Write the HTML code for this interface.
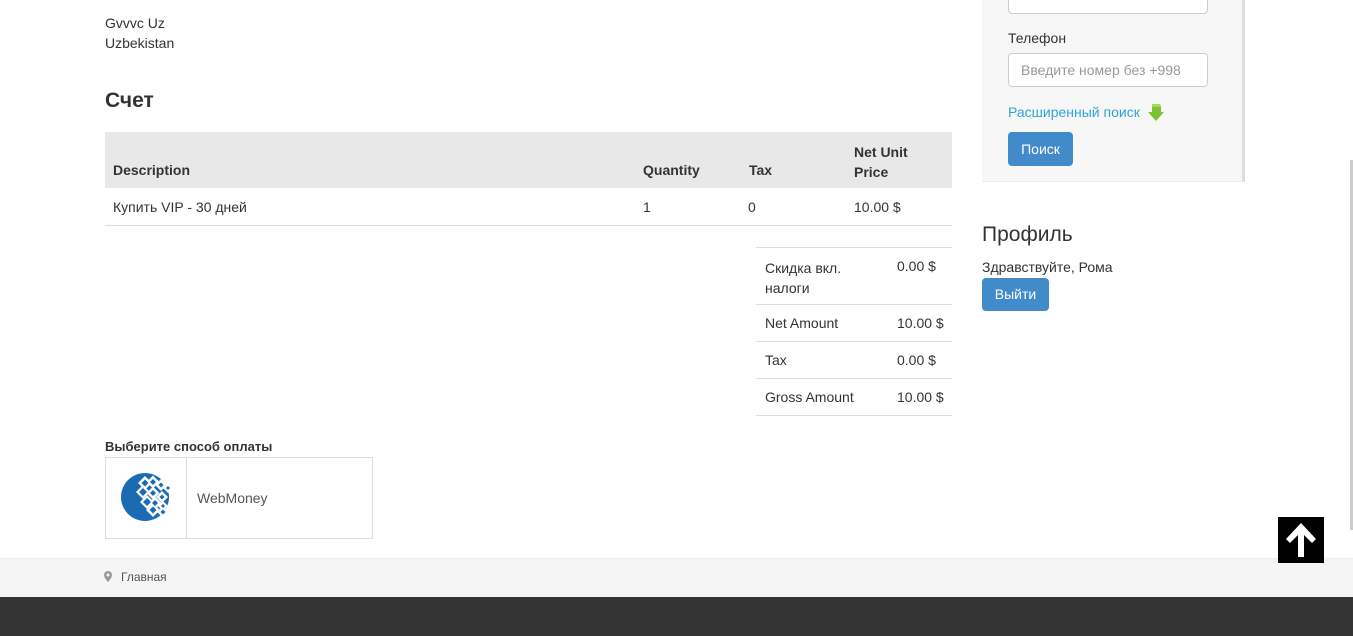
<!DOCTYPE html>
<html><head><meta charset="utf-8"><style>
body{margin:0;width:1353px;height:636px;position:relative;overflow:hidden;background:#fff;font-family:"Liberation Sans",Arial,sans-serif;font-size:14px;color:#333}
.a{position:absolute}
.b{font-weight:bold}
.line{position:absolute;height:1px;background:#ddd}
</style></head><body>
<div class="a" style="left:105px;top:13px;line-height:20px">Gvvvc Uz<br>Uzbekistan</div>
<div class="a" style="left:105px;top:89px;font-size:21px;font-weight:bold">Счет</div>
<div class="a" style="left:105px;top:132px;width:847px;height:56px;background:#e8e8e8"></div>
<div class="a b" style="left:113px;top:162px">Description</div>
<div class="a b" style="left:643px;top:162px">Quantity</div>
<div class="a b" style="left:749px;top:162px">Tax</div>
<div class="a b" style="left:854px;top:142px;line-height:20px">Net Unit<br>Price</div>
<div class="a" style="left:113px;top:199px">Купить VIP - 30 дней</div>
<div class="a" style="left:643px;top:199px">1</div>
<div class="a" style="left:748px;top:199px">0</div>
<div class="a" style="left:854px;top:199px">10.00 $</div>
<div class="line" style="left:105px;top:225px;width:847px"></div>
<div class="line" style="left:756px;top:247px;width:196px"></div>
<div class="a" style="left:765px;top:258px;line-height:20px">Скидка вкл.<br>налоги</div>
<div class="a" style="left:897px;top:258px">0.00 $</div>
<div class="line" style="left:756px;top:304px;width:196px"></div>
<div class="a" style="left:765px;top:315px">Net Amount</div>
<div class="a" style="left:897px;top:315px">10.00 $</div>
<div class="line" style="left:756px;top:341px;width:196px"></div>
<div class="a" style="left:765px;top:352px">Tax</div>
<div class="a" style="left:897px;top:352px">0.00 $</div>
<div class="line" style="left:756px;top:378px;width:196px"></div>
<div class="a" style="left:765px;top:389px">Gross Amount</div>
<div class="a" style="left:897px;top:389px">10.00 $</div>
<div class="line" style="left:756px;top:415px;width:196px"></div>
<div class="a b" style="left:105px;top:439px;font-size:13px">Выберите способ оплаты</div>
<div class="a" style="left:105px;top:457px;width:266px;height:80px;border:1px solid #ddd"></div>
<div class="a" style="left:186px;top:458px;width:1px;height:80px;background:#ddd"></div>
<svg class="a" style="left:120px;top:472px" width="56" height="56" viewBox="0 0 56 56">
<circle cx="25" cy="25" r="24" fill="#1b6bb3"/>
<g fill="#fff">
<path d="M25 4l7 7-7 7-7-7z"/><path d="M33 3.5l6.5 6.5-6.5 6.5-6.5-6.5z"/><path d="M41 7l6 6-6 6-6-6z"/><path d="M48 11l5 5-5 5-5-5z"/>
<path d="M23 13l7 7-7 7-7-7z"/><path d="M33 14.5l6.5 6.5-6.5 6.5-6.5-6.5z"/><path d="M42 19l6 6-6 6-6-6z"/>
<path d="M27 23l7 7-7 7-7-7z"/><path d="M35 24.5l6.5 6.5-6.5 6.5-6.5-6.5z"/><path d="M43 29l5 5-5 5-5-5z"/>
<path d="M33 31l7 7-7 7-7-7z"/><path d="M43 34l6 6-6 6-6-6z"/>
</g>
<g fill="#1b6bb3">
<path d="M25 7.5l3.5 3.5-3.5 3.5-3.5-3.5z"/><path d="M33 7l3 3-3 3-3-3z"/><path d="M41 10.5l2.5 2.5-2.5 2.5-2.5-2.5z"/><path d="M48 14l2 2-2 2-2-2z"/>
<path d="M23 16l4 4-4 4-4-4z"/><path d="M33 18l3 3-3 3-3-3z"/><path d="M42 22.5l2.5 2.5-2.5 2.5-2.5-2.5z"/>
<path d="M27 26l4 4-4 4-4-4z"/><path d="M35 28l3 3-3 3-3-3z"/><path d="M43 32l2 2-2 2-2-2z"/>
<path d="M33 34.5l3.5 3.5-3.5 3.5-3.5-3.5z"/><path d="M43 37.5l2.5 2.5-2.5 2.5-2.5-2.5z"/>
</g>
</svg>
<div class="a" style="left:197px;top:490px;color:#555">WebMoney</div>
<div class="a" style="left:0;top:558px;width:1353px;height:39px;background:#f5f5f5;border-top:1px solid #eee"></div>
<svg class="a" style="left:104px;top:571px" width="8" height="11" viewBox="0 0 8 11"><path d="M4 0a4 4 0 0 0-4 4c0 3 4 7 4 7s4-4 4-7a4 4 0 0 0-4-4z" fill="#999"/><circle cx="4" cy="4" r="1.5" fill="#f5f5f5"/></svg>
<div class="a" style="left:121px;top:570px;font-size:12px;color:#555">Главная</div>
<div class="a" style="left:0;top:597px;width:1353px;height:39px;background:#333"></div>
<div class="a" style="left:982px;top:0;width:260px;height:181px;background:#f7f7f7;border-right:3px solid #ddd;border-bottom:1px solid #eee"></div>
<div class="a" style="left:1008px;top:-10px;width:198px;height:22px;background:#fff;border:1px solid #ccc;border-radius:4px"></div>
<div class="a" style="left:1008px;top:30px">Телефон</div>
<div class="a" style="left:1008px;top:53px;width:198px;height:32px;background:#fff;border:1px solid #ccc;border-radius:4px"></div>
<div class="a" style="left:1021px;top:62px;color:#999">Введите номер без +998</div>
<div class="a" style="left:1008px;top:104px;color:#2fa4d7">Расширенный поиск</div>
<svg class="a" style="left:1147px;top:103px" width="18" height="19" viewBox="0 0 18 19"><path d="M5 1h6q3 0 3 3v5h3l-8 9-8-9h4z" fill="#7cc234"/><path d="M5 1h6q3 0 3 3h-9z" fill="#a6d95a"/></svg>
<div class="a" style="left:1008px;top:132px;width:65px;height:34px;background:#428bca;border-radius:4px;color:#fff;text-align:center;line-height:34px">Поиск</div>
<div class="a" style="left:982px;top:223px;font-size:21px">Профиль</div>
<div class="a" style="left:982px;top:259px">Здравствуйте, Рома</div>
<div class="a" style="left:982px;top:278px;width:67px;height:33px;background:#428bca;border-radius:4px;color:#fff;text-align:center;line-height:33px">Выйти</div>
<div class="a" style="left:1350px;top:160px;width:3px;height:370px;background:#ccc"></div>
<div class="a" style="left:1278px;top:517px;width:46px;height:46px;background:#000"></div>
<svg class="a" style="left:1278px;top:517px" width="46" height="46" viewBox="0 0 46 46"><path d="M23 6L8 22l4 4 8-8v22h6V18l8 8 4-4z" fill="#fff"/></svg>
</body></html>
